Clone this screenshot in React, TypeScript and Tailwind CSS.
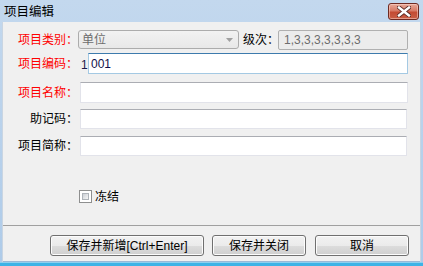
import React from "react";

const cjk = "font-['Liberation_Sans','Noto_Sans_CJK_SC',sans-serif]";

function TextBox({ className = "", focused = false, children }: { className?: string; focused?: boolean; children?: React.ReactNode }) {
  const border = focused
    ? "border border-[#a4c9e3] border-t-[#3d7bad]"
    : "border border-[#e2e3ea] border-t-[#abadb3]";
  return (
    <div className={`bg-white flex items-center shrink-0 ${border} ${className}`}>{children}</div>
  );
}

function Button({ label, className = "" }: { label: string; className?: string }) {
  return (
    <div
      className={`h-[21px] rounded-[3px] border border-[#707070] flex items-center justify-center text-[12px] text-black bg-[linear-gradient(#f2f2f2_0%,#ebebeb_50%,#dddddd_51%,#cfcfcf_100%)] shadow-[inset_0_0_0_1px_#fcfcfc] ${className}`}
    >
      {label}
    </div>
  );
}

function Label({ text, red = false, className = "" }: { text: string; red?: boolean; className?: string }) {
  return (
    <div className={`w-[75px] shrink-0 text-right text-[12px] leading-[14px] ${red ? "text-[#ff0000]" : "text-black"} ${className}`}>
      {text}
    </div>
  );
}

export default function App() {
  return (
    <div className={`w-[423px] h-[266px] flex flex-col bg-[linear-gradient(#c3d8ee,#aecbe9)] ${cjk} overflow-hidden`}>
      {/* title bar */}
      <div className="h-[22px] shrink-0 flex items-start justify-between pl-[4px] pr-[4px]">
        <span className="text-[12.5px] leading-[14px] mt-[5px] text-black">项目编辑</span>
        <div className="mt-[3px] w-[31px] h-[17px] rounded-[3px] border border-[#6e2a22] bg-[linear-gradient(#e8a999_0%,#d77a66_45%,#c44b33_55%,#c95e45_100%)] flex items-center justify-center shadow-[inset_0_0_0_1px_rgba(255,220,210,0.5)]">
          <svg width="14" height="11" viewBox="0 0 14 11">
            <path d="M2 1.5 L12 9.5 M12 1.5 L2 9.5" stroke="#5a2a24" strokeWidth="4.2" strokeLinecap="square" />
            <path d="M2 1.5 L12 9.5 M12 1.5 L2 9.5" stroke="#ffffff" strokeWidth="2.4" strokeLinecap="square" />
          </svg>
        </div>
      </div>

      {/* body */}
      <div className="flex-1 flex flex-col mx-[2px] bg-[#f0f0f0] border-l border-r border-[#c9d5e2]">
        <div className="flex items-center h-[21px] mt-[7px]">
          <Label text="项目类别：" red />
          <div className="w-[161px] h-[19px] rounded-[3px] border border-[#acacac] bg-[linear-gradient(#f2f2f2,#e8e8e8)] flex items-center justify-between pl-[3px] pr-[5px]">
            <span className="text-[12px] text-[#6d6d6d]">单位</span>
            <svg width="7" height="4" viewBox="0 0 7 4">
              <path d="M0 0 L7 0 L3.5 4 Z" fill="#a0a0a0" />
            </svg>
          </div>
          <span className="ml-[4px] text-[12px] text-black">级次：</span>
          <div className="ml-[-1px] w-[130px] h-[20px] mt-[1px] rounded-[2px] border border-[#b0b0b0] bg-[#ececec] flex items-center pl-[5px]">
            <span className="text-[12px] text-[#6d6d6d]">1,3,3,3,3,3,3,3</span>
          </div>
        </div>

        <div className="flex items-center h-[21px] mt-[3px]">
          <Label text="项目编码：" red />
          <span className="ml-[3px] w-[7px] shrink-0 text-[12px] text-[#1a1a4a] mt-[2px]">1</span>
          <TextBox focused className="w-[320px] h-[21px] pl-[2px]">
            <span className="text-[12px] text-[#10104a]">001</span>
          </TextBox>
        </div>

        <div className="flex items-center h-[21px] mt-[8px]">
          <Label text="项目名称：" red />
          <TextBox className="ml-[2px] w-[328px] h-[21px]" />
        </div>

        <div className="flex items-center h-[20px] mt-[6px]">
          <Label text="助记码：" />
          <TextBox className="ml-[2px] w-[327px] h-[20px]" />
        </div>

        <div className="flex items-center h-[20px] mt-[7px]">
          <Label text="项目简称：" />
          <TextBox className="ml-[2px] w-[327px] h-[20px]" />
        </div>

        <div className="flex items-center h-[13px] mt-[34px] ml-[76px]">
          <div className="w-[13px] h-[13px] border border-[#8e8f8f] bg-white p-[2px]">
            <div className="w-full h-full bg-[linear-gradient(135deg,#cbcfd5,#f6f6f6)] border border-[#aeb3b9]" />
          </div>
          <span className="ml-[3px] text-[12px] text-black">冻结</span>
        </div>

        <div className="mt-auto border-t border-[#a0a0a0] h-[37px] flex items-start pt-[9px] border-b border-b-[#9ab8d6]">
          <Button label="保存并新增[Ctrl+Enter]" className="ml-[47px] w-[154px]" />
          <Button label="保存并关闭" className="ml-[8px] w-[94px]" />
          <Button label="取消" className="ml-[9px] w-[94px]" />
        </div>
      </div>
      <div className="h-[4px] shrink-0 bg-[#3db3e6] border-t border-[#8fd0ef]" />
    </div>
  );
}
